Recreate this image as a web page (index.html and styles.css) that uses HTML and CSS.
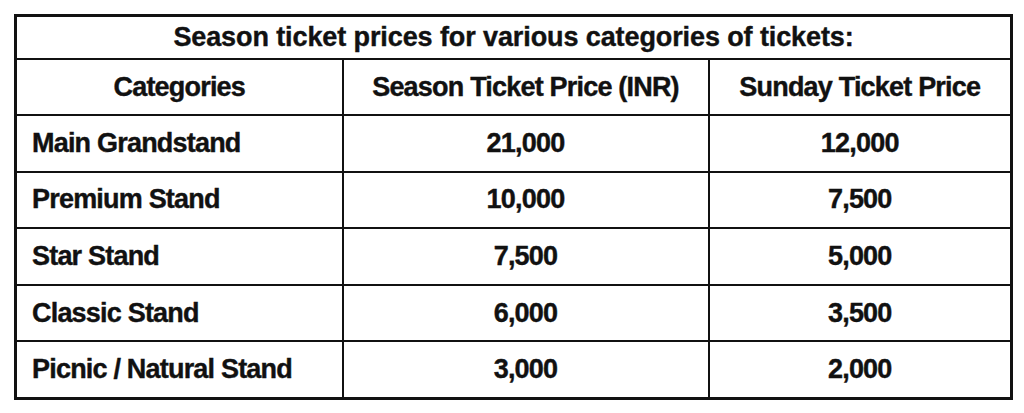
FILE: index.html
```html
<!DOCTYPE html>
<html lang="en">
<head>
<meta charset="utf-8">
<title>Season ticket prices</title>
<link rel="stylesheet" href="styles.css">
</head>
<body>
<table class="prices">
  <colgroup>
    <col class="col-cat">
    <col class="col-season">
    <col class="col-sunday">
  </colgroup>
  <thead>
    <tr class="title-row"><th colspan="3">Season ticket prices for various categories of tickets:</th></tr>
    <tr class="head-row">
      <th>Categories</th>
      <th>Season Ticket Price (INR)</th>
      <th>Sunday Ticket Price</th>
    </tr>
  </thead>
  <tbody>
    <tr><td class="cat">Main Grandstand</td><td>21,000</td><td>12,000</td></tr>
    <tr><td class="cat">Premium Stand</td><td>10,000</td><td>7,500</td></tr>
    <tr><td class="cat">Star Stand</td><td>7,500</td><td>5,000</td></tr>
    <tr><td class="cat">Classic Stand</td><td>6,000</td><td>3,500</td></tr>
    <tr><td class="cat">Picnic / Natural Stand</td><td>3,000</td><td>2,000</td></tr>
  </tbody>
</table>
</body>
</html>
```
FILE: styles.css
```css
html, body {
  margin: 0;
  padding: 0;
  background: #ffffff;
}

body {
  padding: 14px 0 0 14px;
}

.prices {
  border-collapse: collapse;
  width: 996px;
  table-layout: fixed;
  border: 3px solid #111111;
  font-family: "Liberation Sans", Arial, sans-serif;
  font-weight: bold;
  font-size: 27px;
  color: #111111;
  letter-spacing: -0.8px;
  -webkit-text-stroke: 0.4px #111111;
}

.col-cat { width: 327px; }
.col-season { width: 366px; }
.col-sunday { width: 303px; }

.prices th,
.prices td {
  border: 2px solid #111111;
  text-align: center;
  vertical-align: middle;
  padding: 0;
  font-weight: bold;
  line-height: 1;
}

.title-row th {
  height: 41px;
  letter-spacing: -0.1px;
}

.head-row th {
  height: 54px;
}

.prices tbody td {
  height: 54.6px;
}

.prices td.cat {
  text-align: left;
  padding-left: 15px;
}
```
